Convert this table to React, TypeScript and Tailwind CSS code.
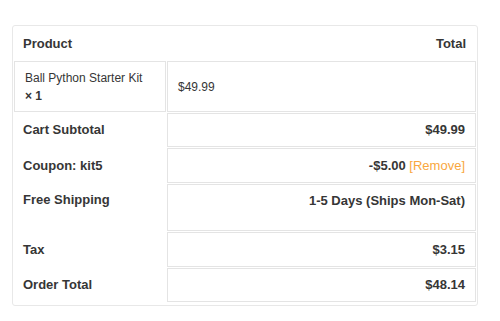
import React from "react";

const cellR = "border border-[#e4e4e4] px-[10px] text-right font-bold text-[13px]";
const labelL = "pl-[9px] pr-[10px] text-left font-bold text-[13px]";

export default function App() {
  return (
    <div
      className="w-[500px] h-[321px] bg-white pt-[25px] pl-[12px] text-[#363636]"
      style={{ fontFamily: '"Liberation Sans", Arial, sans-serif' }}
    >
      <div className="w-[466px] border border-[#e8e8e8] rounded-[3px] pb-[2px]">
        <table className="w-[464px] border-separate border-spacing-[1px] table-fixed leading-[18px]">
          <colgroup>
            <col className="w-[152px]" />
            <col />
          </colgroup>
          <thead>
            <tr className="h-[33px]">
              <th className={labelL + " align-middle"}>Product</th>
              <th className="px-[10px] text-right font-bold text-[13px] align-middle">Total</th>
            </tr>
          </thead>
          <tbody>
            <tr className="h-[51px]">
              <td className="border border-[#e4e4e4] px-[10px] pt-[6px] pb-[6px] text-left align-middle text-[12px]">
                Ball Python Starter Kit
                <br />
                <strong className="font-bold text-[12px]">× 1</strong>
              </td>
              <td className="border border-[#e4e4e4] px-[10px] text-left align-middle text-[12px]">$49.99</td>
            </tr>
            <tr className="h-[34px]">
              <th className={labelL + " align-middle"}>Cart Subtotal</th>
              <td className={cellR + " align-middle"}>$49.99</td>
            </tr>
            <tr className="h-[35px]">
              <th className={labelL + " align-middle"}>Coupon: kit5</th>
              <td className={cellR + " align-middle"}>
                -$5.00{" "}
                <span className="font-normal text-[#f9a73e]">[Remove]</span>
              </td>
            </tr>
            <tr className="h-[47px]">
              <th className={labelL + " align-top pt-[7px]"}>Free Shipping</th>
              <td className={cellR + " align-top pt-[7px]"}>1-5 Days (Ships Mon-Sat)</td>
            </tr>
            <tr className="h-[35px]">
              <th className={labelL + " align-middle"}>Tax</th>
              <td className={cellR + " align-middle"}>$3.15</td>
            </tr>
            <tr className="h-[34px]">
              <th className={labelL + " align-middle"}>Order Total</th>
              <td className={cellR + " align-middle"}>$48.14</td>
            </tr>
          </tbody>
        </table>
      </div>
    </div>
  );
}
